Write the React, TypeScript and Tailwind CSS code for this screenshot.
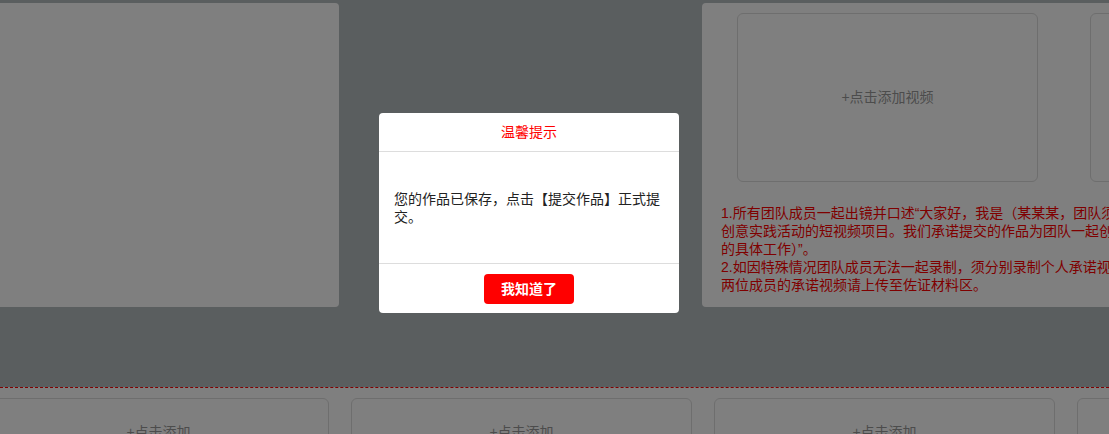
const font = "font-['Liberation_Sans','Noto_Sans_CJK_SC',sans-serif]"

const notes = [
  "1.所有团队成员一起出镜并口述\u201C大家好，我是（某某某，团队须知成员姓名），我们共同参与了本次",
  "创意实践活动的短视频项目。我们承诺提交的作品为团队一起创作完成，并如实说明各自承担",
  "的具体工作）\u201D。",
  "2.如因特殊情况团队成员无法一起录制，须分别录制个人承诺视频，并在视频中说明原因，",
  "两位成员的承诺视频请上传至佐证材料区。",
]

function AddBox({ label, className }: { label: string; className: string }) {
  return (
    <div className={`shrink-0 rounded-[6px] border border-[#dcdcdc] flex justify-center ${className}`}>
      <span className="text-[14px] text-[#999]">{label}</span>
    </div>
  )
}

export default function App() {
  return (
    <div className={`relative w-full h-[434px] overflow-hidden bg-[#b5bdbf] ${font}`}>
      {/* page underneath */}
      <div className="flex gap-[363px] pt-[3px]">
        <div className="shrink-0 ml-[-20px] w-[359px] h-[304px] rounded-[4px] bg-white" />
        <div className="shrink-0 w-[700px] h-[304px] rounded-[4px] bg-white pt-[10px]">
          <div className="flex gap-[52px] pl-[35px]">
            <AddBox label="+点击添加视频" className="w-[301px] h-[169px] items-center" />
            <div className="shrink-0 w-[301px] h-[169px] rounded-[6px] border border-[#dcdcdc]" />
          </div>
          <div className="pl-[19px] pt-[22px] text-[14px] leading-[18px] text-[#ff0000]">
            {notes.map((line) => (
              <div key={line} className="whitespace-nowrap">
                {line}
              </div>
            ))}
          </div>
        </div>
      </div>
      <div className="mt-[80px] border-t border-dashed border-[#ff0000] bg-white pt-[10px]">
        <div className="flex gap-[22px] ml-[-12px]">
          {[0, 1, 2, 3].map((i) => (
            <AddBox key={i} label="+点击添加" className="w-[341px] h-[120px] pt-[23px]" />
          ))}
        </div>
      </div>

      {/* mask */}
      <div className="absolute inset-0 bg-black/50" />

      {/* dialog */}
      <div className="absolute left-[379px] top-[113px] w-[300px] h-[200px] rounded-[4px] bg-white flex flex-col">
        <div className="h-[39px] flex items-center justify-center border-b border-[#dddddd] text-[14px] text-[#ff0000]">
          温馨提示
        </div>
        <div className="h-[111px] flex items-center px-[15px] text-[14px] leading-[18px] text-[#222]">
          您的作品已保存，点击【提交作品】正式提交。
        </div>
        <div className="flex-1 border-t border-[#dddddd] flex justify-center pt-[10px]">
          <button className="w-[90px] h-[30px] rounded-[4px] bg-[#ff0000] text-white text-[14px] font-bold">
            我知道了
          </button>
        </div>
      </div>
    </div>
  )
}
